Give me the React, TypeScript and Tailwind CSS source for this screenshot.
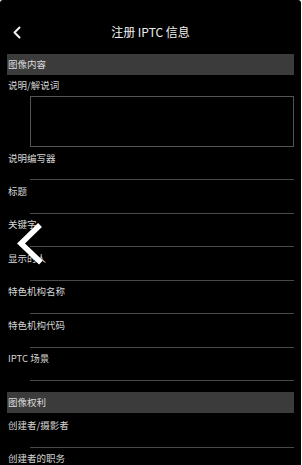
import React from 'react';

const font = { fontFamily: '"Noto Sans CJK SC", "Noto Sans", sans-serif' };

const SectionBar = ({ title }: { title: string }) => (
    <div className="mx-[7px] h-[21px] bg-[#3b3b3b] flex items-center px-[1px] text-[9.5px] text-[#dcdcdc]">
        {title}
    </div>
);

const Field = ({ label, first }: { label: string; first?: boolean }) => (
    <div className={first ? 'pt-[1px]' : ''}>
        <div className="h-[22px] flex items-center px-[8px] text-[9.5px] text-[#d6d6d6]">{label}</div>
        <div className="h-[11.5px] ml-[30px] mr-[7px] border-b border-[#4a4a4a]" />
    </div>
);

export default function App() {
    return (
        <div className="w-[302px] h-[465px] bg-white overflow-hidden" style={font}>
            <div className="relative w-[301px] h-[465px] bg-black rounded-t-[3px] overflow-hidden">
                {/* Header */}
                <div className="pt-[10px]">
                    <div className="relative h-[44px] flex items-center justify-center">
                        <svg className="absolute left-[12px] top-[16px]" width="10" height="13" viewBox="0 0 10 13">
                            <path d="M7.5 1.5 L2.5 6.5 L7.5 11.5" fill="none" stroke="#f2f2f2" strokeWidth="2" strokeLinecap="round" strokeLinejoin="round" />
                        </svg>
                        <span className="text-[12px] text-[#eeeeee]">注册 IPTC 信息</span>
                    </div>
                </div>

                {/* 图像内容 */}
                <SectionBar title="图像内容" />
                <div className="h-[21px] flex items-center px-[8px] text-[9.5px] text-[#d6d6d6]">说明/解说词</div>
                <div className="ml-[30px] mr-[7px] h-[51px] border border-[#555555]" />
                <div>
                    <div className="h-[22px] flex items-center px-[8px] text-[9.5px] text-[#d6d6d6]">说明编写器</div>
                    <div className="h-[11px] ml-[30px] mr-[7px] border-b border-[#4a4a4a]" />
                </div>
                <Field label="标题" />
                <Field label="关键字" />
                <Field label="显示的人" />
                <Field label="特色机构名称" />
                <Field label="特色机构代码" />
                <Field label="IPTC 场景" />

                {/* 图像权利 */}
                <div className="h-[11px]" />
                <SectionBar title="图像权利" />
                <Field label="创建者/摄影者" first />
                <Field label="创建者的职务" />

                {/* overlay back arrow */}
                <svg className="absolute left-[16px] top-[222px]" width="32" height="46" viewBox="0 0 32 46">
                    <path d="M24 3 L5 21.5 L25 40.5" fill="none" stroke="#ffffff" strokeWidth="5.5" strokeLinecap="butt" strokeLinejoin="miter" />
                </svg>
            </div>
        </div>
    );
}
